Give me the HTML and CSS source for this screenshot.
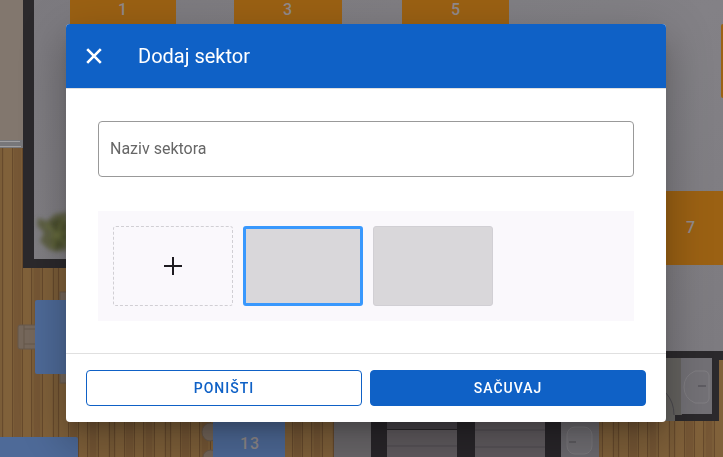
FILE: index.html
```html
<!DOCTYPE html>
<html lang="sr-Latn">
<head>
    <meta charset="UTF-8">
    <meta name="viewport" content="width=device-width, initial-scale=1.0">
    <title>Dodaj sektor</title>
    <link rel="stylesheet" href="styles.css">
</head>
<body>
    <!-- Floor plan -->
    <svg class="floor-plan" viewBox="0 0 723 457" preserveAspectRatio="xMinYMin slice">
        <defs>
            <pattern id="wood" width="56" height="457" patternUnits="userSpaceOnUse">
                <rect width="56" height="457" fill="#7b5d38"/>
                <path fill="#80613a" d="M4 0h8v457H4zM23 0h8v457h-8zM43 0h9v457h-9z"/>
                <path fill="#765735" d="M14 0h7v457h-7zM34 0h6v457h-6z"/>
                <path fill="#674a2c" d="M2 0h1v457H2zM12 0h1v457h-1zM22 0h1v457h-1zM31 0h1v457h-1zM42 0h1v457h-1zM53 0h1v457h-1z"/>
            </pattern>
            <linearGradient id="concrete" x2="1" y2="1">
                <stop offset="0" stop-color="#7c7a7f"/>
                <stop offset=".5" stop-color="#838186"/>
                <stop offset="1" stop-color="#7b797e"/>
            </linearGradient>
            <filter id="soft" x="-30%" y="-30%" width="160%" height="160%"><feGaussianBlur stdDeviation="2"/></filter>
        </defs>
        <rect width="723" height="457" fill="url(#concrete)"/>
        <rect y="140" width="24" height="317" fill="url(#wood)"/>
        <rect y="267" width="334" height="190" fill="url(#wood)"/>
        <rect width="24" height="141" fill="#82776e"/>
        <path fill="#77777a" d="M0 140h24v8H0z"/>
        <path fill="#a09fa1" d="M0 141h20v1H0zM0 146h21v1H0z"/>
        <path fill="#2b292c" d="M23 0h11v259h34v9H23z"/>
        <!-- Plant -->
        <g filter="url(#soft)">
            <path fill="#5f6145" d="M38 218l9 3 8-7 13-2v38l-12 2-8-3-8-8 4-8-7-8z"/>
            <path fill="#4c502f" d="M50 222l10-4 8 4v22l-12 6-5-9 4-8z"/>
            <path fill="none" stroke="#6c713f" stroke-width="2" d="M46 224l20 20M64 218l-12 30M50 238l16-6"/>
        </g>
        <!-- Rooms below -->
        <rect x="334" y="415" width="38" height="42" fill="#6b686b"/>
        <rect x="371" y="415" width="228" height="42" fill="#29262a"/>
        <rect x="387" y="430" width="70" height="27" fill="#615c60"/>
        <rect x="387" y="415" width="70" height="14" fill="#48444a"/>
        <rect x="475" y="415" width="70" height="42" fill="#615c60"/>
        <path fill="none" stroke="#514c51" d="M387 446h70M475 430h70M475 447h70"/>
        <rect x="561" y="415" width="38" height="42" fill="#6d6b70"/>
        <rect x="567" y="427" width="25" height="27" rx="8" fill="#727075" stroke="#7d7b7f"/>
        <path stroke="#4d4b50" d="M569 442h7"/>
        <rect x="599" y="360" width="124" height="97" fill="url(#wood)"/>
        <path fill="#2b292c" d="M660 351h63v9h-4v61h-59z"/>
        <path fill="#64625f" d="M660 358h22v57h-7v6h-15z"/>
        <rect x="681" y="358" width="31" height="56" fill="#727075"/>
        <path fill="#737176" stroke="#807e82" d="M695 371h10q3 0 4 4v24q-1 4-4 4h-10q-11-5-11-16t11-16z"/>
        <path fill="none" stroke="#4b494e" d="M698 386h8M666 393q8 9 8 22"/>
        <!-- Chairs -->
        <g fill="#75675b" stroke="#67584a">
            <rect x="18" y="325" width="22" height="24" rx="2"/>
            <path fill="none" d="M24 325v24M24 329h12M24 344h12"/>
            <rect x="60" y="292" width="14" height="12"/>
            <rect x="60" y="370" width="14" height="13"/>
            <ellipse cx="210" cy="432" rx="8" ry="9"/>
            <ellipse cx="211" cy="457" rx="8" ry="7"/>
        </g>
        <!-- Tables -->
        <g fill="#9b6113">
            <rect x="70" y="-40" width="106" height="66"/>
            <rect x="234" y="-40" width="108" height="66"/>
            <rect x="402" y="-40" width="107" height="66"/>
            <rect x="721" y="24" width="40" height="74" rx="2"/>
            <rect x="640" y="191" width="100" height="74"/>
        </g>
        <g fill="#4e6a98">
            <rect x="35" y="300" width="60" height="74" rx="2"/>
            <rect x="-20" y="437" width="98" height="60" rx="2"/>
            <rect x="213" y="400" width="72" height="80"/>
        </g>
        <g class="table-number">
            <text x="123" y="15">1</text>
            <text x="288" y="15">3</text>
            <text x="456" y="15">5</text>
            <text x="691" y="233">7</text>
            <text x="250" y="449">13</text>
        </g>
    </svg>

    <!-- Dialog -->
    <div class="overlay">
        <form class="dialog" role="dialog" aria-labelledby="dialogTitle">
            <header class="dialog-header">
                <button type="button" class="close-btn" aria-label="Zatvori">
                    <svg width="24" height="24" viewBox="0 0 24 24" fill="none" stroke="currentColor" stroke-width="2.6"><path d="M5.2 5.2l13.6 13.6M18.8 5.2L5.2 18.8"/></svg>
                </button>
                <h1 id="dialogTitle">Dodaj sektor</h1>
            </header>
            <div class="dialog-body">
                <div class="form-group">
                    <input type="text" id="naziv" placeholder=" " required>
                    <label for="naziv">Naziv sektora</label>
                </div>
                <div class="images">
                    <button type="button" class="image-tile add-tile" aria-label="Dodaj sliku">
                        <svg width="20" height="20" viewBox="0 0 20 20" fill="currentColor"><path d="M9 1h2v8h8v2h-8v8H9v-8H1V9h8z"/></svg>
                    </button>
                    <button type="button" class="image-tile selected" aria-label="Slika 1"></button>
                    <button type="button" class="image-tile" aria-label="Slika 2"></button>
                </div>
            </div>
            <footer class="dialog-footer">
                <button type="reset" class="btn btn-outlined">PONIŠTI</button>
                <button type="submit" class="btn btn-primary">SAČUVAJ</button>
            </footer>
        </form>
    </div>
</body>
</html>
```
FILE: styles.css
```css
* {
    box-sizing: border-box;
}

body {
    margin: 0;
    min-height: 100vh;
    overflow: hidden;
    background-color: #7d5e37;
    font-family: Roboto, sans-serif;
}

button,
input {
    font-family: inherit;
}

button {
    cursor: pointer;
}

.floor-plan {
    position: fixed;
    top: 0;
    left: 0;
    width: 100%;
    height: 100%;
}

.table-number {
    fill: #918a8b;
    font-size: 16px;
    font-weight: 500;
    letter-spacing: 1px;
    text-anchor: middle;
}

.overlay {
    position: relative;
    padding: 24px 0 24px 9px;
}

.dialog {
    max-width: 600px;
    margin: 0 auto;
    background-color: #fff;
    border-radius: 4px;
    overflow: hidden;
    box-shadow: 0 11px 15px -7px rgba(0, 0, 0, .2),
        0 24px 38px 3px rgba(0, 0, 0, .14),
        0 9px 46px 8px rgba(0, 0, 0, .12);
}

.dialog-header {
    display: flex;
    align-items: center;
    gap: 20px;
    height: 64px;
    padding: 0 4px;
    background-color: #0f61c6;
    color: #fff;
}

.dialog-header h1 {
    margin: 0;
    font-size: 20px;
    font-weight: 400;
    line-height: 32px;
}

.close-btn {
    display: flex;
    align-items: center;
    justify-content: center;
    width: 48px;
    height: 48px;
    padding: 0;
    border: none;
    background: none;
    color: inherit;
}

.dialog-body {
    display: grid;
    gap: 34px;
    padding: 32px;
    border-top: 1px solid #e0e0e0;
    border-bottom: 1px solid #e0e0e0;
}

.form-group {
    position: relative;
}

.form-group input {
    display: block;
    width: 100%;
    height: 56px;
    padding: 0 11px;
    border: 1px solid #999;
    border-radius: 4px;
    background: none;
    font-size: 16px;
    color: #212121;
}

.form-group label {
    position: absolute;
    top: 16px;
    left: 12px;
    font-size: 16px;
    line-height: 24px;
    color: #666;
    pointer-events: none;
}

.form-group input:focus + label,
.form-group input:not(:placeholder-shown) + label {
    top: -8px;
    padding: 0 4px;
    background-color: #fff;
    font-size: 12px;
    line-height: 16px;
}

.images {
    display: flex;
    flex-wrap: wrap;
    gap: 10px;
    padding: 15px;
    background-color: #faf8fc;
}

.image-tile {
    display: flex;
    align-items: center;
    justify-content: center;
    width: 120px;
    height: 80px;
    padding: 0;
    border: 1px solid #d1cfd4;
    border-radius: 3px;
    background-color: #d9d7da;
    color: #1d1b20;
}

.image-tile.add-tile {
    border-style: dashed;
    background: none;
}

.image-tile.selected {
    border: 3px solid #3998fd;
}

.dialog-footer {
    display: flex;
    gap: 8px;
    padding: 16px 20px;
}

.btn {
    flex: 1 1 auto;
    height: 36px;
    padding: 0 16px;
    border: 1px solid #0f61c6;
    border-radius: 4px;
    font-size: 14px;
    font-weight: 500;
    letter-spacing: 1px;
}

.btn-outlined {
    flex-basis: 2px;
    background-color: #fff;
    color: #0f61c6;
}

.btn-primary {
    flex-basis: 0;
    background-color: #0f61c6;
    color: #fff;
}
```
